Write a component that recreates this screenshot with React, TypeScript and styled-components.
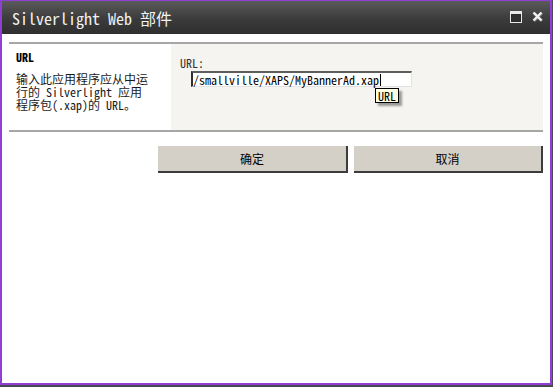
import React from "react";
import styled, { createGlobalStyle } from "styled-components";

const FONT = `"Noto Sans Mono CJK SC", "Liberation Mono", "Noto Sans CJK SC", monospace`;

const Global = createGlobalStyle`
  html, body { margin: 0; padding: 0; background: #ffffff; }
  body { font-family: ${FONT}; font-size: 12px; color: #000; }
  * { box-sizing: border-box; }
`;

const Frame = styled.div`
  width: 553px;
  height: 387px;
  border-right: 1px solid #4a4852;
  border-bottom: 2px solid #4a4852;
  display: flex;
`;

const Window = styled.div`
  flex: 1;
  display: flex;
  flex-direction: column;
  border-top: 1px solid #8f3fd6;
  border-left: 2px solid #8f3fd6;
  border-right: 2px solid #8f3fd6;
  border-bottom: 2px solid #8f3fd6;
  background: #ffffff;
`;

const TitleBar = styled.div`
  height: 33px;
  flex: none;
  display: flex;
  align-items: center;
  padding: 0 6px 0 10px;
  background: linear-gradient(#5a5a5a 0%, #3b3b3b 55%, #2f2f2f 100%);
`;

const Title = styled.div`
  flex: 1;
  color: #f2f2f2;
  font-family: ${FONT};
  font-size: 16px;
  line-height: 16px;
  padding-top: 1px;
  white-space: nowrap;
`;

const TitleButtons = styled.div`
  display: flex;
  align-items: center;
  gap: 10px;
  margin-top: -2px;
`;

const Body = styled.div`
  flex: 1;
  padding: 8px 7px 0 7px;
  display: flex;
  flex-direction: column;
`;

const Separator = styled.div`
  height: 2px;
  background: #a6a6a6;
  flex: none;
`;

const Section = styled.div`
  display: grid;
  grid-template-columns: 162px 1fr;
  height: 86px;
`;

const InfoCol = styled.div`
  padding: 6px 7px 0 7px;
`;

const InfoTitle = styled.div`
  font-weight: bold;
  font-size: 12px;
  line-height: 14px;
  margin-bottom: 8px;
`;

const InfoText = styled.div`
  font-size: 12px;
  line-height: 13px;
  color: #1a1a1a;
  width: 135px;
`;

const FieldCol = styled.div`
  background: #f5f4f1;
  padding: 12px 9px 0 9px;
`;

const FieldLabel = styled.div`
  font-size: 12px;
  line-height: 14px;
  color: #333;
  margin-bottom: 1px;
`;

const InputWrap = styled.div`
  position: relative;
  margin-left: 11px;
  width: 221px;
`;

const TextBox = styled.div`
  height: 16px;
  background: #fff;
  border-top: 2px solid #5e5e5e;
  border-left: 2px solid #2e2e2e;
  border-right: 1px solid #e2e2e2;
  border-bottom: 1px solid #e2e2e2;
  font-size: 12px;
  line-height: 13px;
  padding-left: 0px;
  white-space: nowrap;
  display: flex;
  align-items: center;
  color: #000;
`;

const Caret = styled.span`
  display: inline-block;
  width: 1px;
  height: 12px;
  background: #000;
  margin-left: 1px;
`;

const Tooltip = styled.div`
  position: absolute;
  left: 184px;
  top: 17px;
  height: 15px;
  padding: 0 2px;
  background: #ffffe1;
  border: 1px solid #000;
  box-shadow: 3px 3px 2px #9a9a9a;
  font-size: 12px;
  line-height: 13px;
`;

const ButtonRow = styled.div`
  display: flex;
  justify-content: flex-end;
  gap: 6px;
  padding-top: 14px;
`;

const Button = styled.button<{ $w: number }>`
  width: ${(p) => p.$w}px;
  height: 27px;
  background: #d4d0c8;
  border: none;
  border-right: 2px solid #3c3c3c;
  border-bottom: 2px solid #3c3c3c;
  font-family: "Noto Sans CJK SC", sans-serif;
  font-size: 12px;
  color: #000;
  padding: 0;
  cursor: pointer;
`;

const MaxIcon = () => (
  <svg width="12" height="12" viewBox="0 0 12 12">
    <rect x="0.5" y="0.5" width="11" height="11" fill="#2a2a2a" stroke="#e8e8e8" />
    <rect x="1" y="1" width="10" height="2" fill="#e8e8e8" />
    <rect x="2" y="4" width="8" height="6" fill="#2e2e2e" />
  </svg>
);

const CloseIcon = () => (
  <svg width="12" height="11" viewBox="0 0 12 11">
    <path d="M2 2 L10 10 M10 2 L2 10" stroke="#777" strokeWidth="3" />
    <path d="M1.5 1.5 L9.5 9.5 M9.5 1.5 L1.5 9.5" stroke="#f0f0f0" strokeWidth="2.4" />
  </svg>
);

export default function App() {
  return (
    <>
      <Global />
      <Frame>
        <Window>
          <TitleBar>
            <Title>Silverlight Web 部件</Title>
            <TitleButtons>
              <MaxIcon />
              <CloseIcon />
            </TitleButtons>
          </TitleBar>
          <Body>
            <Separator />
            <Section>
              <InfoCol>
                <InfoTitle>URL</InfoTitle>
                <InfoText>输入此应用程序应从中运行的 Silverlight 应用程序包(.xap)的 URL。</InfoText>
              </InfoCol>
              <FieldCol>
                <FieldLabel>URL:</FieldLabel>
                <InputWrap>
                  <TextBox>
                    /smallville/XAPS/MyBannerAd.xap
                    <Caret />
                  </TextBox>
                  <Tooltip>URL</Tooltip>
                </InputWrap>
              </FieldCol>
            </Section>
            <Separator />
            <ButtonRow>
              <Button $w={190}>确定</Button>
              <Button $w={189}>取消</Button>
            </ButtonRow>
          </Body>
        </Window>
      </Frame>
    </>
  );
}
